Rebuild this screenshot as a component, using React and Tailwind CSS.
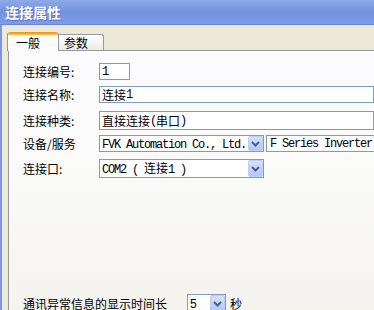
import React from "react";

const cjk = { fontFamily: '"Noto Sans CJK SC", "Liberation Sans", sans-serif' };
const mono = { fontFamily: '"Liberation Mono", "Noto Sans CJK SC", monospace' };

function DropButton() {
  return (
    <div className="w-[15px] h-full flex items-center justify-center rounded-[2px] border border-[#bccff9] bg-gradient-to-b from-[#d4e0fd] to-[#b3c7f6]">
      <svg width="9" height="6" viewBox="0 0 9 6">
        <polyline points="1,1 4.5,4.5 8,1" fill="none" stroke="#4d6185" strokeWidth="2" />
      </svg>
    </div>
  );
}

function Label({ children }) {
  return (
    <div className="w-[76px] shrink-0 text-[12px] leading-none text-black" style={cjk}>
      {children}
    </div>
  );
}

function Latin({ children }) {
  return (
    <span className="tracking-[-1.2px] whitespace-pre" style={mono}>
      {children}
    </span>
  );
}

export default function App() {
  return (
    <div className="w-[374px] h-[310px] overflow-hidden bg-[#ece9d8] flex flex-col" style={cjk}>
      <div className="h-[25px] shrink-0 flex items-center px-[5px] bg-gradient-to-b from-[#8fa9ea] via-[#7291df] to-[#7d9de6] border-b border-[#6a86d8]">
        <span className="text-[14px] font-bold text-white leading-none [text-shadow:1px_1px_0_#5671c4]">连接属性</span>
      </div>
      <div className="flex flex-1 min-h-0">
        <div className="w-[2px] shrink-0 bg-[#7a96df]" />
        <div className="flex-1 flex flex-col pt-[7px] min-w-0">
          <div className="flex items-end pl-[5px]">
            <div className="relative z-10 w-[52px] h-[19px] -mb-px bg-[#fcfcfe] border-l border-r border-[#919b9c] rounded-t-[3px] flex flex-col">
              <div className="h-[3px] rounded-t-[3px] bg-gradient-to-b from-[#e68b2c] to-[#ffc73c]" />
              <div className="flex-1 flex items-center pl-[8px] text-[12px] leading-none text-black">一般</div>
            </div>
            <div className="w-[45px] h-[16px] bg-gradient-to-b from-[#ffffff] to-[#ecebe6] border-t border-r border-[#919b9c] rounded-tr-[3px] flex items-center pl-[5px] text-[12px] leading-none text-black">
              参数
            </div>
          </div>
          <div className="ml-[6px] flex-1 border-t border-l border-[#919b9c] bg-gradient-to-b from-[#fcfcfe] via-[#fafaf9] to-[#f4f3ee] pl-[14px] flex flex-col">
            <div className="mt-[12px] flex items-center">
              <Label>连接编号:</Label>
              <div className="w-[31px] h-[17px] border border-[#7f9db9] bg-white flex items-center pl-[2px] text-[12px] leading-none">
                <Latin>1</Latin>
              </div>
            </div>
            <div className="mt-[6px] flex items-center">
              <Label>连接名称:</Label>
              <div className="w-[300px] h-[17px] border border-[#7f9db9] bg-white flex items-center pl-[2px] text-[12px] leading-none">
                连接<Latin>1</Latin>
              </div>
            </div>
            <div className="mt-[8px] flex items-center">
              <Label>连接种类:</Label>
              <div className="w-[300px] h-[19px] border border-[#7f9db9] bg-white flex items-center pl-[2px] text-[12px] leading-none">
                直接连接<Latin>(</Latin>串口<Latin>)</Latin>
              </div>
            </div>
            <div className="mt-[5px] flex items-center">
              <Label>设备/服务</Label>
              <div className="w-[165px] h-[17px] shrink-0 border border-[#7f9db9] bg-white flex items-center">
                <span className="flex-1 pl-[2px] text-[12px] leading-none whitespace-nowrap">
                  <Latin>FVK Automation Co., Ltd.</Latin>
                </span>
                <DropButton />
              </div>
              <div className="ml-[2px] w-[130px] h-[17px] shrink-0 border border-[#7f9db9] bg-white flex items-center pl-[3px] text-[12px] leading-none whitespace-nowrap">
                <Latin>F Series Inverter</Latin>
              </div>
            </div>
            <div className="mt-[7px] flex items-center">
              <Label>连接口:</Label>
              <div className="w-[165px] h-[19px] border border-[#7f9db9] bg-white flex items-center">
                <span className="flex-1 pl-[2px] text-[12px] leading-none whitespace-nowrap">
                  <Latin>COM2 ( </Latin>连接<Latin>1 )</Latin>
                </span>
                <DropButton />
              </div>
            </div>
            <div className="mt-[116px] flex items-center">
              <div className="w-[164px] shrink-0 text-[12px] leading-none">通讯异常信息的显示时间长</div>
              <div className="w-[39px] h-[19px] border border-[#7f9db9] bg-white flex items-center">
                <span className="flex-1 pl-[2px] text-[12px] leading-none" style={{ fontFamily: '"Liberation Sans", sans-serif' }}>5</span>
                <DropButton />
              </div>
              <div className="ml-[4px] text-[12px] leading-none">秒</div>
            </div>
          </div>
        </div>
      </div>
    </div>
  );
}
